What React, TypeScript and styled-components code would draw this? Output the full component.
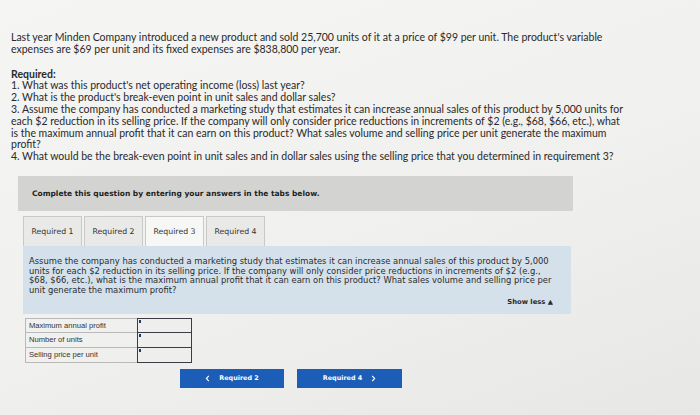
import React from "react";
import styled, { createGlobalStyle } from "styled-components";

const Global = createGlobalStyle`
  html, body { margin: 0; padding: 0; }
  body {
    width: 700px;
    height: 415px;
    overflow: hidden;
    background: linear-gradient(160deg, #f5f5f3 0%, #f0f0ee 55%, #e7e7e5 100%);
    color: #262626;
  }
`;

const Page = styled.div`
  padding: 32px 0 0 11px;
  width: 689px;
  box-sizing: border-box;
`;

const Intro = styled.div`
  font-family: Lato, "Open Sans", sans-serif;
  font-size: 10.5px;
  line-height: 11.8px;
  width: 616px;
  color: #2a2a2a;
`;

const Para = styled.p`
  margin: 0;
`;

const Bold = styled.div`
  font-weight: 700;
  margin-top: 13px;
`;

const Instruction = styled.div`
  margin: 13px 0 0 7px;
  width: 555px;
  height: 35px;
  background: #d3d4d2;
  display: flex;
  align-items: center;
  padding-left: 14px;
  box-sizing: border-box;
  font-family: "DejaVu Sans", Verdana, sans-serif;
  font-weight: 700;
  font-size: 7.5px;
  color: #1e1e1e;
`;

const Tabs = styled.div`
  display: flex;
  gap: 2px;
  margin: 5px 0 0 12px;
  height: 30px;
`;

const Tab = styled.div<{ $active?: boolean; $w: number }>`
  width: ${(p) => p.$w}px;
  box-sizing: border-box;
  border: 1px solid #c9cac8;
  border-bottom: none;
  background: ${(p) => (p.$active ? "#f7f7f6" : "#e9e9e7")};
  display: flex;
  align-items: center;
  justify-content: center;
  font-family: "DejaVu Sans", Verdana, sans-serif;
  font-size: 7.8px;
  color: #333;
`;

const Panel = styled.div`
  margin-left: 12px;
  width: 548px;
  height: 68px;
  background: #d4e1eb;
  box-sizing: border-box;
  padding: 11px 18px 0 6px;
  font-family: "DejaVu Sans", Verdana, sans-serif;
  font-size: 8.4px;
  line-height: 9.6px;
  color: #2b2b2b;
  display: flex;
  flex-direction: column;
`;

const PanelText = styled.div`
  width: 528px;
`;

const ShowLess = styled.div`
  margin-top: 3px;
  align-self: flex-end;
  font-weight: 700;
  font-size: 6.8px;
  color: #2a2a2a;
`;

const Table = styled.div`
  margin: 4px 0 0 14px;
  display: grid;
  grid-template-columns: 112px 55px;
  width: 167px;
`;

const Label = styled.div<{ $first?: boolean }>`
  height: 15px;
  box-sizing: border-box;
  border: 1px solid #b9b9b9;
  border-top: ${(p) => (p.$first ? "1px solid #b9b9b9" : "none")};
  border-right: none;
  padding-left: 3px;
  display: flex;
  align-items: center;
  font-family: "Liberation Sans", Arial, sans-serif;
  font-size: 7.6px;
  color: #333;
`;

const Input = styled.div<{ $first?: boolean }>`
  position: relative;
  height: 15px;
  box-sizing: border-box;
  border: 1.5px solid #3a3d44;
  border-top: ${(p) => (p.$first ? "1.5px solid #3a3d44" : "none")};
  background: #eeeeec;
`;

const Mark = styled.span`
  position: absolute;
  left: 1px;
  top: 1px;
  width: 2px;
  height: 3px;
  background: #233a6b;
`;

const Nav = styled.div`
  display: flex;
  gap: 13px;
  margin: 6px 0 0 169px;
`;

const NavButton = styled.div<{ $w: number }>`
  width: ${(p) => p.$w}px;
  height: 19px;
  background: #1b5db7;
  display: flex;
  align-items: center;
  justify-content: center;
  gap: 9px;
  color: #fff;
  font-family: "DejaVu Sans", Verdana, sans-serif;
  font-weight: 700;
  font-size: 6.4px;
`;

const Chevron = styled.svg`
  width: 5px;
  height: 7px;
`;

const Left = () => (
  <Chevron viewBox="0 0 5 8">
    <path d="M4 1 L1.2 4 L4 7" stroke="#fff" strokeWidth="1.3" fill="none" />
  </Chevron>
);
const Right = () => (
  <Chevron viewBox="0 0 5 8">
    <path d="M1 1 L3.8 4 L1 7" stroke="#fff" strokeWidth="1.3" fill="none" />
  </Chevron>
);

export default function App() {
  return (
    <Page>
      <Global />
      <Intro>
        <Para>
          Last year Minden Company introduced a new product and sold 25,700 units of it at a price of $99 per unit. The
          product's variable expenses are $69 per unit and its fixed expenses are $838,800 per year.
        </Para>
        <Bold>Required:</Bold>
        <Para>1. What was this product's net operating income (loss) last year?</Para>
        <Para>2. What is the product's break-even point in unit sales and dollar sales?</Para>
        <Para>
          3. Assume the company has conducted a marketing study that estimates it can increase annual sales of this
          product by 5,000 units for each $2 reduction in its selling price. If the company will only consider price
          reductions in increments of $2 (e.g., $68, $66, etc.), what is the maximum annual profit that it can earn on
          this product? What sales volume and selling price per unit generate the maximum profit?
        </Para>
        <Para>
          4. What would be the break-even point in unit sales and in dollar sales using the selling price that you
          determined in requirement 3?
        </Para>
      </Intro>
      <Instruction>Complete this question by entering your answers in the tabs below.</Instruction>
      <Tabs>
        <Tab $w={59}>Required 1</Tab>
        <Tab $w={59}>Required 2</Tab>
        <Tab $w={59} $active>
          Required 3
        </Tab>
        <Tab $w={59}>Required 4</Tab>
      </Tabs>
      <Panel>
        <PanelText>
          Assume the company has conducted a marketing study that estimates it can increase annual sales of this product
          by 5,000 units for each $2 reduction in its selling price. If the company will only consider price reductions in
          increments of $2 (e.g., $68, $66, etc.), what is the maximum annual profit that it can earn on this product?
          What sales volume and selling price per unit generate the maximum profit?
        </PanelText>
        <ShowLess>Show less ▲</ShowLess>
      </Panel>
      <Table>
        <Label $first>Maximum annual profit</Label>
        <Input $first>
          <Mark />
        </Input>
        <Label>Number of units</Label>
        <Input>
          <Mark />
        </Input>
        <Label>Selling price per unit</Label>
        <Input>
          <Mark />
        </Input>
      </Table>
      <Nav>
        <NavButton $w={104}>
          <Left />
          Required 2
        </NavButton>
        <NavButton $w={105}>
          Required 4
          <Right />
        </NavButton>
      </Nav>
    </Page>
  );
}
